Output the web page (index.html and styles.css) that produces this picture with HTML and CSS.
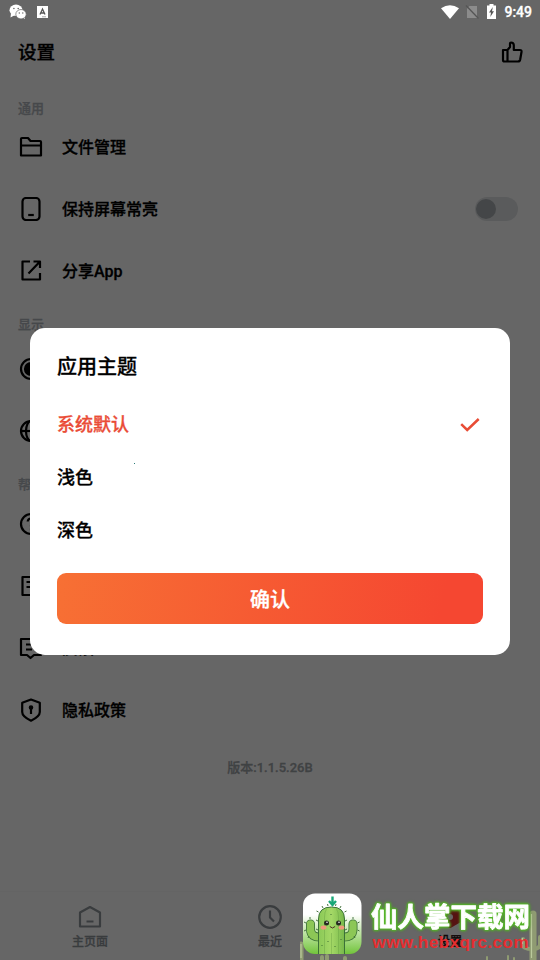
FILE: index.html
```html
<!DOCTYPE html>
<html lang="zh-CN">
<head>
<meta charset="utf-8">
<title>设置</title>
<link rel="stylesheet" href="styles.css">
</head>
<body>
<div class="screen">
  <header class="topbar">
    <h1>设置</h1>
    <svg class="icon" viewBox="0 0 24 24"><path d="M3 10h4.500v11.500H4.500Q3 21.500 3 20zM7.500 10l2.500-3V3.500Q10 2.500 11 2.500q2.800 0 2.800 2.800V10h6q2 0 1.700 2l-1.300 7.500q-.4 2-2.200 2H7.500"/></svg>
  </header>

  <main class="list">
    <h2 class="label">通用</h2>
    <div class="row"><svg class="icon" viewBox="0 0 24 24"><path d="M2 20.500V4q0-1 1-1h6l2.500 3H21q1 0 1 1v13.500zM2 10.500h20"/></svg><span>文件管理</span></div>
    <div class="row"><svg class="icon" viewBox="0 0 24 24"><rect x="3.500" y="1" width="17" height="22" rx="3.500"/><path d="M9.200 18h5.600"/></svg><span>保持屏幕常亮</span><i class="switch"></i></div>
    <div class="row"><svg class="icon" viewBox="0 0 24 24"><path d="M11 2.500H3.500v18H21V14M14.500 2.500H21V9M21 2.500L9.500 14.500"/></svg><span>分享App</span></div>

    <h2 class="label label-display">显示</h2>
    <div class="row"><svg class="icon" viewBox="0 0 24 24"><circle cx="12" cy="12" r="10"/><circle cx="12" cy="12" r="6" fill="#000"/></svg></div>
    <div class="row"><svg class="icon" viewBox="0 0 24 24"><circle cx="12" cy="12" r="10"/><ellipse cx="12" cy="12" rx="5" ry="10"/><path d="M2 12h20"/></svg></div>

    <h2 class="label label-help">帮助</h2>
    <div class="row"><svg class="icon" viewBox="0 0 24 24"><circle cx="12" cy="12" r="10"/><path d="M8.700 9.500q.3-3 3.300-3 3.300 0 3.300 2.800 0 2-3.300 3.700v1.500M12 16.500v2"/></svg></div>
    <div class="row"><svg class="icon" viewBox="0 0 24 24"><path d="M3.500 3h17v18h-17zM7.500 8h8M7.500 13h8"/></svg></div>
    <div class="row"><svg class="icon" viewBox="0 0 24 24"><path d="M2 3h20v16h-7l-3.500 3L8 19H2zM7 8.500h9M7 13.500h6"/></svg><span>反馈</span></div>
    <div class="row"><svg class="icon" viewBox="0 0 24 24"><path d="M12 1.500l8.800 3.200V14q0 4.500-8.800 8.700Q3.200 18.500 3.200 14V4.700zM12 11v5"/><circle cx="12" cy="9.500" r="1.200" fill="#000"/></svg><span>隐私政策</span></div>
    <p class="version">版本:1.1.5.26B</p>
  </main>

  <nav class="tabs">
    <div class="tab"><svg class="icon" viewBox="0 0 24 24"><path d="M2 21.500V7.500L12 2l10 5.500v14zM8.500 16.500h7"/></svg><span>主页面</span></div>
    <div class="tab"><svg class="icon" viewBox="0 0 24 24"><circle cx="12" cy="12" r="10.800"/><path d="M12 5.500v7l4 4"/></svg><span>最近</span></div>
    <div class="tab active"><svg class="icon" viewBox="0 0 24 24"><path d="M12 2l9.500 5.500v9L12 22l-9.500-5.500v-9z" fill="currentColor"/><circle cx="12" cy="12" r="3" fill="#fff" stroke="none"/></svg><span>设置</span></div>
  </nav>
</div>

<div class="scrim">
  <div class="status">
    <svg class="chat" viewBox="0 0 18 16"><ellipse cx="7" cy="6.200" rx="6.500" ry="5.700"/><path d="M2 9l-.5 4.500L6 11zM14 13l1.700 2.300L16 12z"/><ellipse cx="12" cy="10.200" rx="5.200" ry="4.700" stroke="#666" stroke-width=".7"/><g fill="#666"><circle cx="4.900" cy="4.500" r=".8"/><circle cx="9.200" cy="4.500" r=".8"/><circle cx="10.300" cy="9" r=".7"/><circle cx="13.800" cy="9" r=".7"/></g></svg>
    <svg class="lang" viewBox="0 0 11 12"><path d="M0 0h11v12H0z"/><path d="M3 8.500L5.500 3 8 8.500M3.900 7h3.200" fill="none" stroke="#555" stroke-width="1.300"/><path d="M5.500 10.800h1M7.500 10.800h1" stroke="#555"/></svg>
    <svg class="wifi" viewBox="0 0 18 14"><path d="M0 3.300Q9-3 18 3.300L9 14z"/></svg>
    <svg class="sim" viewBox="0 0 14 14"><path d="M4.500 1H12v12H2V3.500z" fill="#8c8c8c"/><path d="M1 .5l12.500 13" stroke="#555" stroke-width="1.300"/></svg>
    <svg class="battery" viewBox="0 0 9 15"><path d="M0 1.500h2.500V0h4v1.500H9V15H0z"/><path d="M5.800 3L2 8.500h2L3.300 13 7 7.200H5z" fill="#555"/></svg>
    <span>9:49</span>
  </div>

  <section class="dialog">
    <h3>应用主题</h3>
    <div class="option selected"><span>系统默认</span><svg viewBox="0 0 20 14"><path d="M1.200 6.200L7.200 12 18.700 1"/></svg></div>
    <div class="option"><span>浅色</span><i class="speck"></i></div>
    <div class="option"><span>深色</span></div>
    <button>确认</button>
  </section>

  <svg class="banner" viewBox="300 885 240 75">
    <defs>
      <linearGradient id="tile" x1="0" y1="0" x2="0" y2="1"><stop offset=".35" stop-color="#fff"/><stop offset="1" stop-color="#72c43b"/></linearGradient>
      <linearGradient id="plant" x1="0" y1="0" x2="1" y2="0"><stop offset="0" stop-color="#8bc957"/><stop offset=".5" stop-color="#a4d866"/><stop offset="1" stop-color="#77b84b"/></linearGradient>
      <clipPath id="tileClip"><rect x="303" y="893.500" width="58.500" height="60.500" rx="12"/></clipPath>
    </defs>
    <g class="far" fill="none" stroke-linecap="round">
      <path d="M533 960v-46" stroke-width="7"/><path d="M523 939v6q0 4 10 4M540 937v8q-1 4-7 4" stroke-width="4"/>
      <path d="M301 960v-16" stroke-width="5"/><path d="M514 960v-2M508 960v-4M487 960v-3" stroke-width="2"/>
      <path d="M327 960v-4M322 960v-3M345 960v-2" stroke-width="4"/>
    </g>
    <path d="M531.500 958v-44M301 958v-14M522.500 944v-6" fill="none" stroke="#c5d6a6" stroke-width="1.200" opacity=".8"/>
    <rect x="303" y="893.500" width="58.500" height="60.500" rx="12" fill="url(#tile)"/>
    <g clip-path="url(#tileClip)">
      <g fill="none" stroke-linecap="round" stroke-linejoin="round">
        <path d="M310.500 924v5q0 9 11 8M353 924v5q0 9-11 8" stroke="#3b7137" stroke-width="9"/>
        <path d="M310.500 924v5q0 9 11 8M353 924v5q0 9-11 8" stroke="#8cc756" stroke-width="7.400"/>
      </g>
      <path d="M318.500 956v-37q0-12 13-12t13 12v37z" fill="url(#plant)" stroke="#3b7137"/>
      <path d="M324.500 956v-39q0-5 2-8M331.500 956v-23M338.500 956v-39q0-5-2-8" fill="none" stroke="#659f41" stroke-width=".6" opacity=".7"/>
      <path d="M318.500 912l-2-1M318 921l-2-1M318 930l-2-1M344.500 912l2-1M345 921l2-1M345 930l2-1M323 908l-1-2M340 908l1-2M328 906l-.5-2M335.500 906l.5-2M306 923l-2-1M306 930l-2 1M310 919v-2M357.500 923l2-1M357.500 930l2 1M353 919v-2M309 936l-1 2M354 936l1 2M328 941v1M335 946v1M322 945v1M341 939v1M331 914v1" stroke="#36672f" stroke-width=".9"/>
    </g>
    <g fill="#ef987b"><ellipse cx="323.500" cy="927.500" rx="2.900" ry="2"/><ellipse cx="341.500" cy="927.500" rx="2.900" ry="2"/></g>
    <circle cx="326.500" cy="923" r="2.500" fill="#252a20"/><circle cx="338.500" cy="923" r="2.500" fill="#252a20"/>
    <circle cx="327" cy="922.200" r=".8" fill="#fff"/><circle cx="339" cy="922.200" r=".8" fill="#fff"/>
    <path d="M329.800 926.500q2.700 3 5.300 0" fill="none" stroke="#4b2d24"/>
    <path d="M332.500 896.500v7M329 901l3.500 4 3.500-4" fill="none" stroke="#19a878" stroke-width="2.400"/>
    <text class="brand" x="371" y="927" textLength="159" lengthAdjust="spacingAndGlyphs">仙人掌下载网</text>
    <text class="url" x="372.500" y="948" textLength="156" lengthAdjust="spacing">www.hebxqrc.com</text>
  </svg>
</div>
</body>
</html>
```
FILE: styles.css
```css
* { box-sizing: border-box; margin: 0; padding: 0; }
body {
  width: 540px; height: 960px; overflow: hidden; position: relative;
  font-family: Roboto, "Noto Sans CJK SC", sans-serif;
  color: #000; background: #fff;
  -webkit-text-stroke: .3px currentColor;
}
.screen { height: 960px; display: flex; flex-direction: column; padding-top: 24px; }
.icon { width: 24px; height: 24px; flex: none; fill: none; stroke: currentColor; stroke-width: 2.200; stroke-linejoin: round; }

.topbar { height: 59px; padding: 0 16px 3px 18px; display: flex; align-items: center; justify-content: space-between; }
.topbar h1 { font-size: 18.500px; line-height: 24px; font-weight: 500; padding-top: 2px; }

.list { flex: 1; padding: 17px 22px 0 19px; }
.label { height: 16px; padding-top: 1px; font-size: 13px; line-height: 16px; font-weight: 500; color: #b0b5bb; margin-left: -1px; }
.label-display { height: 36px; padding-top: 15px; }
.label-help { height: 31px; padding-top: 15px; }
.row { height: 62px; display: flex; align-items: center; gap: 19px; font-size: 16px; font-weight: 500; }
.row span { padding-bottom: 2px; }
.switch { width: 43px; height: 24px; margin-left: auto; border-radius: 12px; padding: 2px 1px; background: #e1e4e6; }
.switch::before { content: ""; display: block; width: 20px; height: 20px; border-radius: 50%; background: #aaafb3; }
.version { margin: 18px -3px 0 0; font-size: 13px; line-height: 18px; text-align: center; font-weight: 500; color: #9fa5a9; }

.tabs { height: 69px; display: grid; grid-template-columns: repeat(3, 1fr); border-top: 1px solid #fafafa; color: #90969b; }
.tab { display: flex; flex-direction: column; align-items: center; padding-top: 13px; font-size: 12px; line-height: 16px; font-weight: 500; gap: 5px; }
.tab.active { color: #d8302e; }
.tab.active span { color: #2d1214; }

.scrim { position: absolute; inset: 0; background: rgba(0, 0, 0, .6); display: flex; flex-direction: column; align-items: center; }
.status { width: 100%; height: 24px; padding: 0 8px 0 9px; display: flex; align-items: center; fill: #fff; color: #fff; font-size: 14px; font-weight: 500; }
.chat { width: 18px; height: 16px; }
.lang { width: 11px; height: 12px; margin-left: 10px; }
.wifi { width: 18px; height: 14px; margin-left: auto; }
.sim { width: 14px; height: 14px; margin-left: 6px; }
.battery { width: 9px; height: 15px; margin: 0 8px 2px; }

.dialog { width: 480px; height: 327px; margin-top: 304px; padding: 25px 27px 0; border-radius: 15px; background: #fff; }
.dialog h3 { height: 28px; margin-bottom: 16px; font-size: 20px; line-height: 28px; font-weight: 500; }
.option { height: 53px; display: flex; align-items: center; font-size: 18px; font-weight: 500; }
.option span { padding-bottom: 1px; }
.option svg { width: 20px; height: 14px; margin: 2px 3px 0 auto; fill: none; stroke: #e84c35; stroke-width: 2.500; }
.selected { color: #ea4c37; }
.speck { width: 1px; height: 1px; margin: -27px 0 0 41px; background: #2d7c78; }
.dialog button { display: block; width: 426px; height: 51px; margin-top: 17px; padding-bottom: 1px; border: 0; border-radius: 9px; background: linear-gradient(100deg, #f77034 0%, #f54731 90%); color: #fff; font: 500 20px Roboto, "Noto Sans CJK SC", sans-serif; -webkit-text-stroke: .3px #fff; }

.banner { position: absolute; left: 300px; bottom: 0; width: 240px; height: 75px; -webkit-text-stroke: 0; }
.far { stroke: #8f9b72; }
.brand { font: 700 27px "Noto Sans CJK SC", sans-serif; fill: #fff; stroke: #fff; stroke-width: .8px; stroke-linejoin: round; filter: drop-shadow(0 0 1px #58b82a) drop-shadow(0 0 1px #58b82a) drop-shadow(0 0 .8px #4aa322); }
.url { font: 700 17px "Liberation Sans", sans-serif; fill: #e62d2f; stroke: none; }
```
